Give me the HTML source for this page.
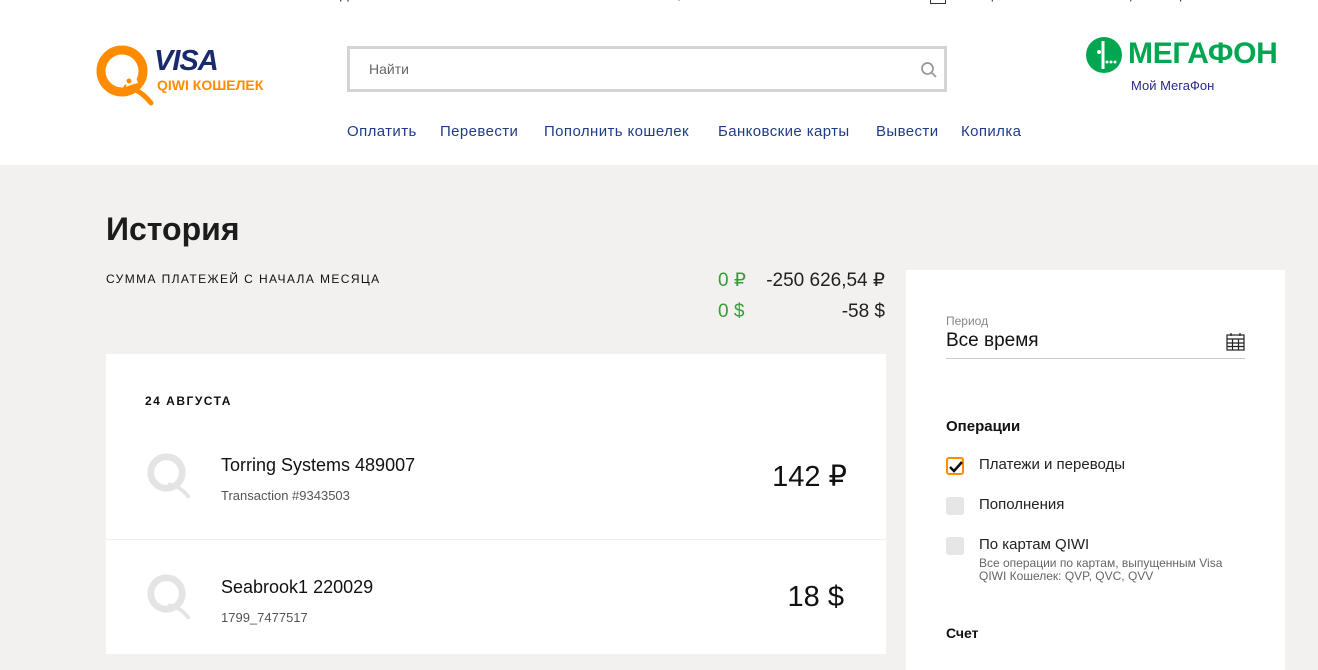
<!DOCTYPE html>
<html><head><meta charset="utf-8"><style>
*{margin:0;padding:0;box-sizing:border-box}
body{width:1318px;height:648px;overflow:hidden;background:#f2f1ef;font-family:"Liberation Sans","DejaVu Sans",sans-serif;color:#000;position:relative}
.abs{position:absolute}
header{position:absolute;left:0;top:0;width:1318px;height:165px;background:#fff}
.nav a{position:absolute;top:123px;font-size:15px;color:#1f3c88;text-decoration:none;white-space:nowrap;letter-spacing:0.4px}
.card{position:absolute;background:#fff}
.cb{position:absolute;left:946px;width:18px;height:18px;border-radius:3px;background:#e6e6e6}
.lbl{position:absolute;left:979px;font-size:15px;color:#222}
</style></head><body>
<header>
<div class="abs" style="left:340px;top:-13px;font-size:13px;color:#333">Д</div>
<div class="abs" style="left:495px;top:-13px;font-size:13px;color:#333">Счет вжи</div>
<div class="abs" style="left:670px;top:-13px;font-size:13px;color:#333">0,00 ₽</div>
<div class="abs" style="left:930px;top:-6px;width:16px;height:10px;border:1.5px solid #333"></div>
<div class="abs" style="left:962px;top:-13px;font-size:13px;color:#1f3c88;word-spacing:8px">История Кошелек Помощь Настройки Выйти</div>
<svg class="abs" style="left:96px;top:45px" width="64" height="64" viewBox="0 0 64 64">
<circle cx="26" cy="26" r="21" fill="none" stroke="#ff8c00" stroke-width="9"/>
<path d="M30 42 Q44 44 55 58" fill="none" stroke="#ff8c00" stroke-width="5" stroke-linecap="round"/>
<path d="M34 28 Q40 30 42 38 Q34 40 30 42 Z" fill="#fff"/>
<circle cx="33" cy="36" r="2.5" fill="#ff8c00"/>
</svg>
<div class="abs" style="left:154px;top:45px;font-size:29px;font-weight:bold;font-style:italic;color:#1a2a6c;letter-spacing:-1px">VISA</div>
<div class="abs" style="left:157px;top:77px;font-size:14px;font-weight:bold;color:#ff8c00">QIWI КОШЕЛЕК</div>
<div class="abs" style="left:347px;top:46px;width:600px;height:46px;border:3px solid #d4d4d4;background:#fff"></div>
<div class="abs" style="left:369px;top:61px;font-size:14px;color:#666">Найти</div>
<svg class="abs" style="left:920px;top:61px" width="18" height="18" viewBox="0 0 18 18"><circle cx="7.5" cy="7.5" r="5.5" fill="none" stroke="#999" stroke-width="1.8"/><path d="M11.5 11.5L16 16" stroke="#999" stroke-width="1.8"/></svg>
<svg class="abs" style="left:1086px;top:37px" width="36" height="36" viewBox="0 0 36 36"><circle cx="18" cy="18" r="18" fill="#00a650"/><path d="M17 4 V32" stroke="#fff" stroke-width="3"/><circle cx="13" cy="15" r="2" fill="#fff"/><circle cx="21" cy="25" r="1.5" fill="#fff"/><circle cx="25" cy="25" r="1.5" fill="#fff"/><circle cx="29" cy="25" r="1.5" fill="#fff"/></svg>
<div class="abs" style="left:1128px;top:37px;font-size:30px;font-weight:bold;color:#00a650;letter-spacing:-0.3px">МЕГАФОН</div>
<div class="abs" style="left:1131px;top:78px;font-size:13px;color:#2a2a8a">Мой МегаФон</div>
<div class="nav">
<a style="left:347px">Оплатить</a><a style="left:440px">Перевести</a><a style="left:544px">Пополнить кошелек</a><a style="left:718px">Банковские карты</a><a style="left:876px">Вывести</a><a style="left:961px">Копилка</a>
</div>
</header>
<div class="abs" style="left:106px;top:211px;font-size:32px;font-weight:bold;color:#1c1c1c">История</div>
<div class="abs" style="left:106px;top:272px;font-size:12px;letter-spacing:1.4px;color:#111">СУММА ПЛАТЕЖЕЙ С НАЧАЛА МЕСЯЦА</div>
<div class="abs" style="left:718px;top:269px;font-size:19px;color:#3a9a3a">0 ₽</div>
<div class="abs" style="right:433px;top:269px;font-size:19px;color:#222">-250 626,54 ₽</div>
<div class="abs" style="left:718px;top:301px;font-size:19px;color:#3a9a3a">0 $</div>
<div class="abs" style="right:433px;top:301px;font-size:19px;color:#222">-58 $</div>
<div class="card" style="left:106px;top:354px;width:780px;height:300px"></div>
<div class="abs" style="left:145px;top:394px;font-size:12px;letter-spacing:1.5px;font-weight:bold;color:#111">24 АВГУСТА</div>
<div class="abs" style="left:106px;top:539px;width:780px;height:1px;background:#eee"></div>
<svg class="abs" style="left:147px;top:453px" width="48" height="48" viewBox="0 0 64 64"><circle cx="26" cy="26" r="21" fill="none" stroke="#e4e4e4" stroke-width="9"/><path d="M30 42 Q44 44 55 58" fill="none" stroke="#e4e4e4" stroke-width="5" stroke-linecap="round"/></svg>
<svg class="abs" style="left:147px;top:574px" width="48" height="48" viewBox="0 0 64 64"><circle cx="26" cy="26" r="21" fill="none" stroke="#e4e4e4" stroke-width="9"/><path d="M30 42 Q44 44 55 58" fill="none" stroke="#e4e4e4" stroke-width="5" stroke-linecap="round"/></svg>
<div class="abs" style="left:221px;top:455px;font-size:18px;color:#111">Torring Systems 489007</div>
<div class="abs" style="left:221px;top:488px;font-size:13px;color:#555">Transaction #9343503</div>
<div class="abs" style="right:471px;top:459px;font-size:29px;color:#111">142 ₽</div>
<div class="abs" style="left:221px;top:577px;font-size:18px;color:#111">Seabrook1 220029</div>
<div class="abs" style="left:221px;top:610px;font-size:13px;color:#555">1799_7477517</div>
<div class="abs" style="right:474px;top:581px;font-size:29px;color:#111">18 $</div>
<div class="card" style="left:906px;top:270px;width:379px;height:400px"></div>
<div class="abs" style="left:946px;top:314px;font-size:12px;color:#888">Период</div>
<div class="abs" style="left:946px;top:330px;font-size:19px;color:#111">Все время</div>
<svg class="abs" style="left:1226px;top:332px" width="19" height="19" viewBox="0 0 19 19" fill="none" stroke="#222" stroke-width="1.2"><rect x="1" y="3" width="17" height="15"/><path d="M1 7H18M1 11H18M1 14.5H18M6.5 7V18M12.5 7V18M5 1V4M14 1V4"/></svg>
<div class="abs" style="left:946px;top:358px;width:299px;height:1px;background:#ccc"></div>
<div class="abs" style="left:946px;top:418px;font-size:15px;font-weight:bold;color:#111">Операции</div>
<div class="cb" style="top:457px;background:#fff;border:2px solid #ff8c00"></div>
<svg class="abs" style="left:946px;top:457px" width="20" height="20" viewBox="0 0 20 20"><path d="M4 10L8 14L16 5" fill="none" stroke="#111" stroke-width="2.5"/></svg>
<div class="lbl" style="top:456px">Платежи и переводы</div>
<div class="cb" style="top:497px"></div>
<div class="lbl" style="top:496px">Пополнения</div>
<div class="cb" style="top:537px"></div>
<div class="lbl" style="top:536px">По картам QIWI</div>
<div class="abs" style="left:979px;top:557px;width:270px;font-size:12px;line-height:13px;color:#666">Все операции по картам, выпущенным Visa QIWI Кошелек: QVP, QVC, QVV</div>
<div class="abs" style="left:946px;top:625px;font-size:14px;font-weight:bold;color:#111">Счет</div>
</body></html>
